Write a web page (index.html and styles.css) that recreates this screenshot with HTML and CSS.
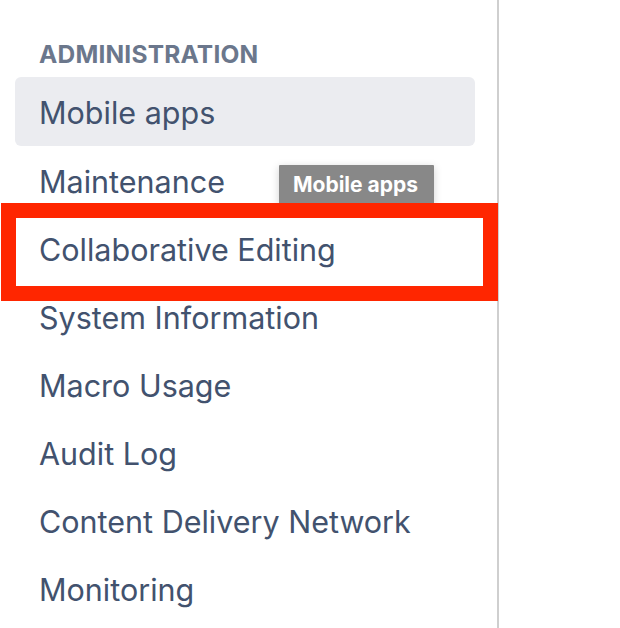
FILE: index.html
```html
<!DOCTYPE html>
<html>
<head>
<meta charset="utf-8">
<link rel="stylesheet" href="styles.css">
</head>
<body>
<div class="page">
  <aside class="sidebar">
    <h2 class="heading">ADMINISTRATION</h2>
    <ul class="nav">
      <li class="item active">Mobile apps</li>
      <li class="item">Maintenance</li>
      <li class="item">Collaborative Editing</li>
      <li class="item">System Information</li>
      <li class="item">Macro Usage</li>
      <li class="item">Audit Log</li>
      <li class="item">Content Delivery Network</li>
      <li class="item">Monitoring</li>
    </ul>
    <div class="tooltip">Mobile apps</div>
    <div class="highlight-box"></div>
  </aside>
</div>
</body>
</html>
```

FILE: styles.css
```css
html, body {
  margin: 0;
  padding: 0;
  background: #ffffff;
}
body {
  font-family: Inter, "Noto Sans", "Liberation Sans", sans-serif;
  color: #42526e;
}
.page {
  width: 620px;
  height: 628px;
  overflow: hidden;
}
.sidebar {
  position: relative;
  width: 497px;
  height: 628px;
  border-right: 2px solid #cfcfcf;
  box-sizing: content-box;
}
.heading {
  margin: 0 0 10px 0;
  padding: 41px 0 0 39px;
  font-size: 24.5px;
  font-weight: 700;
  line-height: 26px;
  color: #6b778c;
  letter-spacing: 0.2px;
}
.nav {
  list-style: none;
  margin: 0 0 0 15px;
  padding: 0;
  width: 460px;
}
.item {
  height: 68px;
  line-height: 71px;
  padding-left: 24px;
  font-size: 30.5px;
  border-radius: 6px;
  white-space: nowrap;
}
.item.active {
  background: #ebecf0;
  height: 69px;
  line-height: 71px;
}
.tooltip {
  position: absolute;
  left: 279px;
  top: 165px;
  width: 155px;
  height: 40px;
  box-sizing: border-box;
  padding: 8px 0 0 14px;
  background: #888888;
  color: #ffffff;
  font-size: 21px;
  font-weight: 700;
  line-height: 24px;
  box-shadow: 0 2px 8px rgba(0,0,0,0.18);
  border-radius: 1px;
}
.highlight-box {
  position: absolute;
  left: 1px;
  top: 203px;
  width: 497px;
  height: 98px;
  box-sizing: border-box;
  border: 15px solid #ff2600;
}
```
